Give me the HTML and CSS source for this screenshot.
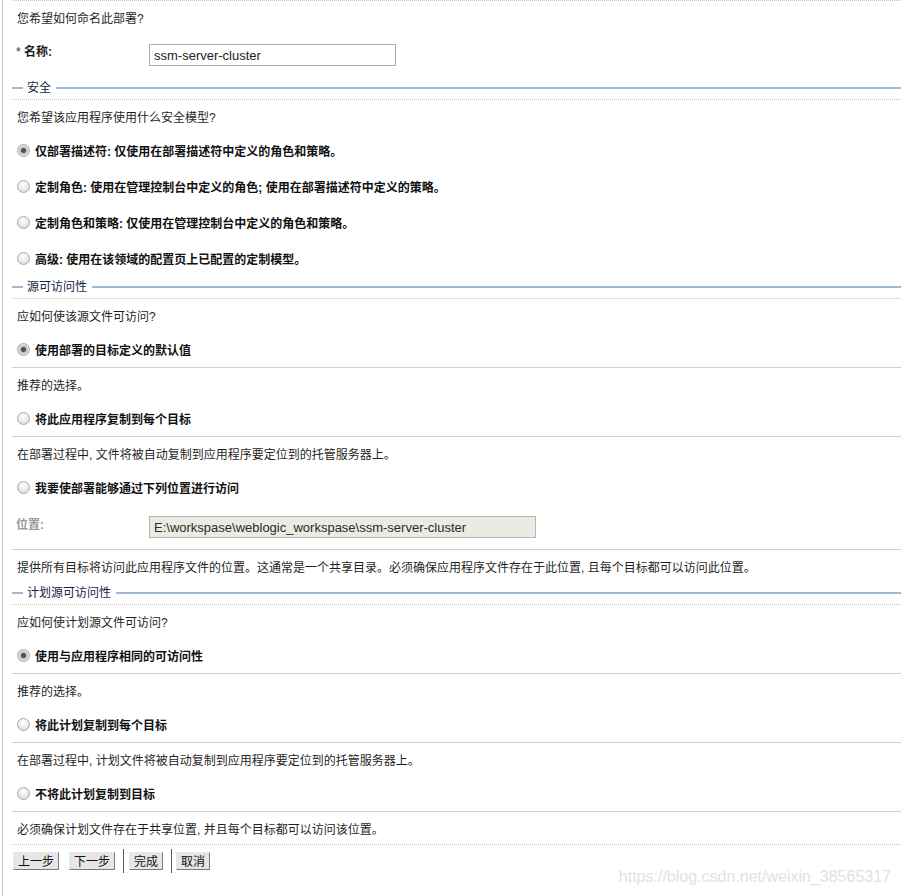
FILE: index.html
```html
<!DOCTYPE html>
<html lang="zh-CN">
<head>
<meta charset="utf-8">
<title>部署</title>
<link rel="stylesheet" href="styles.css">
</head>
<body>
<div class="page">
  <div class="dotted"></div>
  <div class="row text-row">您希望如何命名此部署?</div>
  <div class="row field-row name-row">
    <div class="flabel"><span class="req">*</span> 名称:</div>
    <input class="finput" type="text" value="ssm-server-cluster">
  </div>

  <div class="sect"><span class="sect-lead"></span><span class="sect-title">安全</span><span class="sect-line"></span></div>
  <div class="dotted"></div>
  <div class="row text-row">您希望该应用程序使用什么安全模型?</div>
  <label class="row radio-row"><input class="radio" type="radio" name="sec" checked><span class="rlabel">仅部署描述符: 仅使用在部署描述符中定义的角色和策略。</span></label>
  <label class="row radio-row"><input class="radio" type="radio" name="sec"><span class="rlabel">定制角色: 使用在管理控制台中定义的角色; 使用在部署描述符中定义的策略。</span></label>
  <label class="row radio-row"><input class="radio" type="radio" name="sec"><span class="rlabel">定制角色和策略: 仅使用在管理控制台中定义的角色和策略。</span></label>
  <label class="row radio-row"><input class="radio" type="radio" name="sec"><span class="rlabel">高级: 使用在该领域的配置页上已配置的定制模型。</span></label>

  <div class="sect"><span class="sect-lead"></span><span class="sect-title">源可访问性</span><span class="sect-line"></span></div>
  <div class="dotted"></div>
  <div class="row text-row">应如何使该源文件可访问?</div>
  <label class="row radio-row"><input class="radio" type="radio" name="src" checked><span class="rlabel">使用部署的目标定义的默认值</span></label>
  <div class="solid"></div>
  <div class="row text-row">推荐的选择。</div>
  <label class="row radio-row"><input class="radio" type="radio" name="src"><span class="rlabel">将此应用程序复制到每个目标</span></label>
  <div class="solid"></div>
  <div class="row text-row">在部署过程中, 文件将被自动复制到应用程序要定位到的托管服务器上。</div>
  <label class="row radio-row"><input class="radio" type="radio" name="src"><span class="rlabel">我要使部署能够通过下列位置进行访问</span></label>
  <div class="row field-row loc-row">
    <div class="flabel disabled">位置:</div>
    <input class="finput wide" type="text" value="E:\workspase\weblogic_workspase\ssm-server-cluster" disabled>
  </div>
  <div class="solid"></div>
  <div class="row text-row">提供所有目标将访问此应用程序文件的位置。这通常是一个共享目录。必须确保应用程序文件存在于此位置, 且每个目标都可以访问此位置。</div>

  <div class="sect"><span class="sect-lead"></span><span class="sect-title">计划源可访问性</span><span class="sect-line"></span></div>
  <div class="dotted"></div>
  <div class="row text-row">应如何使计划源文件可访问?</div>
  <label class="row radio-row"><input class="radio" type="radio" name="plan" checked><span class="rlabel">使用与应用程序相同的可访问性</span></label>
  <div class="solid"></div>
  <div class="row text-row">推荐的选择。</div>
  <label class="row radio-row"><input class="radio" type="radio" name="plan"><span class="rlabel">将此计划复制到每个目标</span></label>
  <div class="solid"></div>
  <div class="row text-row">在部署过程中, 计划文件将被自动复制到应用程序要定位到的托管服务器上。</div>
  <label class="row radio-row"><input class="radio" type="radio" name="plan"><span class="rlabel">不将此计划复制到目标</span></label>
  <div class="solid"></div>
  <div class="row text-row">必须确保计划文件存在于共享位置, 并且每个目标都可以访问该位置。</div>
  <div class="dotted"></div>

  <div class="buttons">
    <button class="btn" type="button">上一步</button>
    <button class="btn btn-gap" type="button">下一步</button>
    <span class="sep"></span>
    <button class="btn" type="button">完成</button>
    <span class="sep sep2"></span>
    <button class="btn" type="button">取消</button>
  </div>
</div>
<div class="watermark">https://blog.csdn.net/weixin_38565317</div>
</body>
</html>
```

FILE: styles.css
```css
html, body {
  margin: 0;
  padding: 0;
  background: #ffffff;
}

body {
  font-family: "Liberation Sans", "Noto Sans CJK SC", sans-serif;
  font-size: 12px;
  color: #1a1a1a;
  width: 901px;
  height: 896px;
  overflow: hidden;
  position: relative;
}

.page {
  margin-left: 2px;
  border-left: 1px solid #c9ccd1;
  padding-left: 9px;
  height: 896px;
  box-sizing: border-box;
}

.dotted {
  border-top: 1px dotted #c4c4c4;
  height: 0;
}

.solid {
  border-top: 1px solid #cfcfcf;
  height: 0;
}

.row {
  display: flex;
  align-items: center;
  padding-left: 5px;
  box-sizing: border-box;
}

.text-row {
  height: 32px;
  color: #1f1f1f;
}

.radio-row {
  height: 36px;
  cursor: default;
}

.radio {
  appearance: none;
  -webkit-appearance: none;
  margin: 0 5px 0 0;
  width: 13px;
  height: 13px;
  border-radius: 50%;
  border: 1px solid #a9a9a9;
  background: radial-gradient(circle at 50% 35%, #ffffff 0%, #eeeeee 45%, #cfcfcf 100%);
  box-sizing: border-box;
  position: relative;
  flex: none;
}

.radio:checked {
  background: radial-gradient(circle at 50% 50%, #4a4a4a 0%, #5a5a5a 28%, #bdbdbd 38%, #e6e6e6 70%, #d0d0d0 100%);
}

.rlabel {
  font-weight: bold;
  color: #111;
}

.field-row {
  align-items: flex-start;
  padding-left: 4px;
}

.name-row {
  height: 44px;
  padding-top: 11px;
}

.loc-row {
  height: 44px;
  padding-top: 11px;
}

.flabel {
  width: 133px;
  flex: none;
  font-weight: bold;
  line-height: 16px;
  padding-top: 0;
}

.flabel .req {
  font-weight: normal;
  color: #333;
}

.flabel.disabled {
  color: #9a9a9a;
  padding-top: 1px;
}

.finput {
  width: 247px;
  height: 22px;
  box-sizing: border-box;
  border: 1px solid #adadad;
  padding: 0 4px;
  margin: 0;
  font-family: "Liberation Sans", sans-serif;
  font-size: 13px;
  color: #222;
  background: #fff;
  outline: none;
}

.finput.wide {
  width: 387px;
  background: #ebebe4;
  color: #2a2a2a;
  border-color: #b5b5b0;
}

.sect {
  display: flex;
  align-items: center;
  height: 22px;
}

.sect-lead {
  width: 11px;
  height: 2px;
  background: #a2b8d3;
  flex: none;
}

.sect-title {
  padding: 0 5px 0 4px;
  color: #142540;
  font-size: 12px;
  line-height: 16px;
}

.sect-line {
  flex: 1;
  height: 2px;
  background: #a2b8d3;
}

.buttons {
  display: flex;
  align-items: center;
  padding-left: 1px;
  height: 32px;
}

.btn {
  font-family: "Noto Sans CJK SC", sans-serif;
  font-size: 12px;
  line-height: 16px;
  height: 18px;
  padding: 0 4px;
  margin: 0;
  border: 1px solid;
  border-color: #e8e8e8 #7a7a7a #7a7a7a #e8e8e8;
  background: #e6e6e6;
  color: #111;
  box-sizing: border-box;
}

.btn-gap {
  margin-left: 10px;
}

.sep {
  width: 1px;
  height: 24px;
  background: #5a5a5a;
  margin: 0 5px 0 8px;
  flex: none;
}

.sep2 {
  margin: 0 4px 0 8px;
}

.watermark {
  position: absolute;
  right: 10px;
  top: 868px;
  font-family: "Liberation Sans", sans-serif;
  font-size: 16px;
  color: #e2e2e2;
}
```
